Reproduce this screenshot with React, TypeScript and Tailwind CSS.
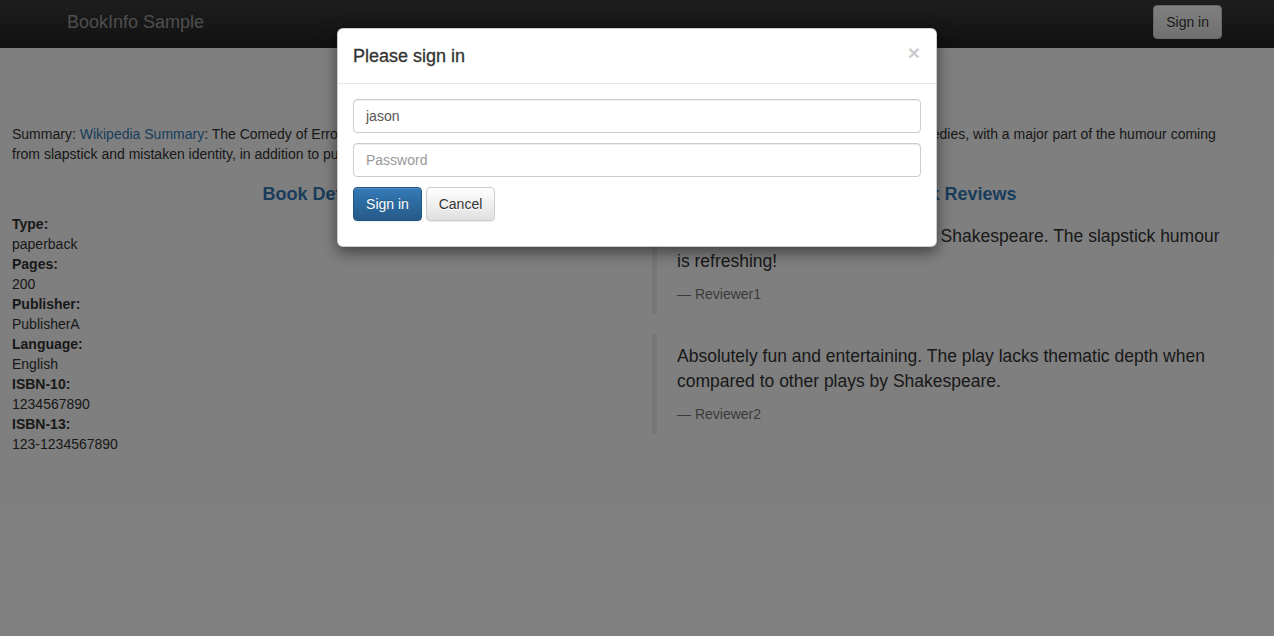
import React from "react";

const font = { fontFamily: '"Liberation Sans", Arial, Helvetica, sans-serif' };

function Review({ lines, who }: { lines: string[]; who: string }) {
  return (
    <blockquote className="border-l-[5px] border-[#eeeeee] py-[10px] px-[20px] mb-[20px]">
      <p className="text-[17.5px] leading-[25px] mb-[10px]">
        {lines.map((l, i) => (
          <React.Fragment key={i}>
            {l}
            {i < lines.length - 1 && <br />}
          </React.Fragment>
        ))}
      </p>
      <footer className="text-[14px] leading-[20px] text-[#777777]">— {who}</footer>
    </blockquote>
  );
}

export default function App() {
  const details: [string, string][] = [
    ["Type:", "paperback"],
    ["Pages:", "200"],
    ["Publisher:", "PublisherA"],
    ["Language:", "English"],
    ["ISBN-10:", "1234567890"],
    ["ISBN-13:", "123-1234567890"],
  ];
  return (
    <div style={font} className="relative w-[1274px] h-[636px] overflow-hidden bg-white text-[#333333] text-[14px] leading-[20px]">
      {/* navbar */}
      <nav className="h-[48px] bg-gradient-to-b from-[#3c3c3c] to-[#222222]">
        <div className="w-[1170px] mx-auto px-[15px] flex justify-between">
          <div className="pt-[12px] text-[18px] leading-[20px] text-[#9d9d9d]">BookInfo Sample</div>
          <button className="mt-[5px] -mr-[15px] h-[34px] px-[12px] rounded-[4px] border border-[#cccccc] bg-gradient-to-b from-white to-[#e0e0e0] text-[#333333] text-[14px] leading-[20px] [text-shadow:0_1px_0_#fff]">
            Sign in
          </button>
        </div>
      </nav>

      <div className="mt-[40px] px-[12px]">
        <h3 className="text-center text-[#337ab7] text-[24px] leading-[26px] font-medium mb-[10px]">The Comedy of Errors</h3>
        <p className="mb-[10px]">
          Summary: <span className="text-[#337ab7]">Wikipedia Summary</span>: The Comedy of Errors is one of William Shakespeare's early plays. It is his shortest and one of his most farcical comedies, with a major part of the humour coming
          <br />
          from slapstick and mistaken identity, in addition to puns and word play.
        </p>
      </div>

      <div className="grid grid-cols-2">
        <div className="pl-[12px] pr-[15px]">
          <h4 className="mt-[10px] mb-[10px] text-center text-[#337ab7] text-[18px] leading-[20px] font-bold">Book Details</h4>
          <dl>
            {details.map(([k, v]) => (
              <React.Fragment key={k}>
                <dt className="font-bold">{k}</dt>
                <dd>{v}</dd>
              </React.Fragment>
            ))}
          </dl>
        </div>
        <div className="px-[15px]">
          <h4 className="mt-[10px] mb-[10px] text-center text-[#337ab7] text-[18px] leading-[20px] font-bold">Book Reviews</h4>
          <Review
            lines={["An extremely entertaining play by Shakespeare. The slapstick humour", "is refreshing!"]}
            who="Reviewer1"
          />
          <Review
            lines={["Absolutely fun and entertaining. The play lacks thematic depth when", "compared to other plays by Shakespeare."]}
            who="Reviewer2"
          />
        </div>
      </div>

      {/* backdrop */}
      <div className="absolute inset-0 bg-black/50" />

      {/* modal */}
      <div className="absolute left-[337px] top-[28px] w-[600px] bg-white rounded-[6px] border border-black/20 shadow-[0_5px_15px_rgba(0,0,0,0.5)]">
        <div className="flex items-start justify-between px-[15px] py-[15px] border-b border-[#e5e5e5]">
          <h4 className="text-[18px] leading-[24px] font-medium text-[#333333] [-webkit-text-stroke:0.3px_#333333]">Please sign in</h4>
          <span className="-mt-[2px] mr-[1px] text-[21px] leading-[21px] font-bold text-black opacity-20">×</span>
        </div>
        <div className="p-[15px] flex flex-col gap-[10px]">
          <div className="h-[34px] rounded-[4px] border border-[#cccccc] px-[12px] flex items-center text-[#555555] shadow-[inset_0_1px_1px_rgba(0,0,0,0.075)]">
            jason
          </div>
          <div className="h-[34px] rounded-[4px] border border-[#cccccc] px-[12px] flex items-center text-[#999999] shadow-[inset_0_1px_1px_rgba(0,0,0,0.075)]">
            Password
          </div>
          <div className="flex gap-[4px] mb-[10px]">
            <button className="h-[34px] w-[69px] rounded-[4px] border border-[#245580] bg-gradient-to-b from-[#337ab7] to-[#265a88] text-white text-[14px] [text-shadow:0_-1px_0_rgba(0,0,0,0.2)] shadow-[inset_0_1px_0_rgba(255,255,255,0.15),0_1px_1px_rgba(0,0,0,0.075)]">
              Sign in
            </button>
            <button className="h-[34px] w-[69px] rounded-[4px] border border-[#cccccc] bg-gradient-to-b from-white to-[#e0e0e0] text-[#333333] text-[14px] [text-shadow:0_1px_0_#fff] shadow-[inset_0_1px_0_rgba(255,255,255,0.15),0_1px_1px_rgba(0,0,0,0.075)]">
              Cancel
            </button>
          </div>
        </div>
      </div>
    </div>
  );
}
